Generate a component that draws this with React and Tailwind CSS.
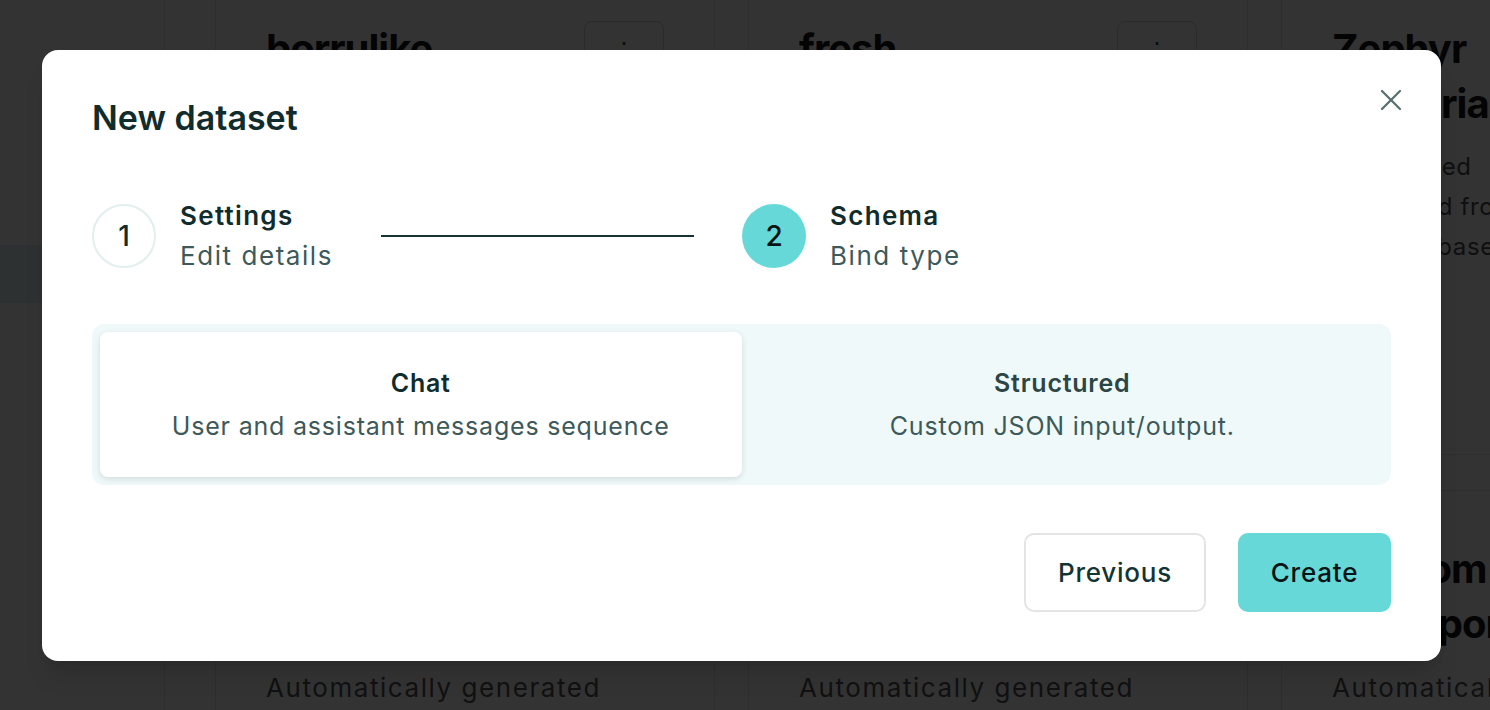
import { X } from 'lucide-react';

const font = { fontFamily: 'Inter, "Noto Sans", sans-serif' };

function BgCard({ title, lines = [], button, footer, tall }) {
  return (
    <div className={tall ? 'h-[485px] border border-gray-200 rounded-xl px-[50px] pt-[50px] relative' : 'border border-gray-200 rounded-xl px-[50px] pt-[50px] pb-8 relative'}>
      {button && (
        <div className="absolute right-[50px] top-[50px] w-[80px] h-[60px] border border-gray-300 rounded-lg flex items-center justify-center text-2xl text-gray-700">⋮</div>
      )}
      <div className="text-[40px] leading-[55px] font-bold text-[#151515] tracking-tight">{title}</div>
      {lines.length > 0 && (
        <div className="mt-4 text-[24px] leading-[40px] text-[#4a4a4a] tracking-wide">
          {lines.map((l, i) => (
            <div key={i}>{l}</div>
          ))}
        </div>
      )}
      {footer && <div className="mt-[19px] text-[26px] leading-[36px] text-[#555555] tracking-[0.06em]">{footer}</div>}
    </div>
  );
}

function Step({ n, title, sub, active }) {
  return (
    <div className="flex items-center gap-6">
      <div
        className={
          active
            ? 'w-16 h-16 rounded-full bg-[#66d8d8] flex items-center justify-center text-[28px] font-medium text-[#0a1414]'
            : 'w-16 h-16 rounded-full border-2 border-[#e3eeee] flex items-center justify-center text-[28px] font-medium text-[#102c2c]'
        }
      >
        {n}
      </div>
      <div className="flex flex-col">
        <span className="text-[26px] leading-[40px] font-semibold text-[#102c2c] tracking-[0.05em]">{title}</span>
        <span className="text-[26px] leading-[40px] text-[#3d5959] tracking-[0.06em]">{sub}</span>
      </div>
    </div>
  );
}

export default function App() {
  return (
    <div className="relative w-[1490px] h-[710px] overflow-hidden bg-white" style={font}>
      {/* page behind the dialog */}
      <div className="flex h-full">
        <aside className="w-[165px] shrink-0 border-r border-gray-200 pt-[245px]">
          <div className="h-[58px] bg-[#dff5f5]" />
        </aside>
        <main className="flex-1 pl-[50px] -mt-[30px]">
          <div className="grid grid-cols-[500px_500px_500px] gap-x-[33px] gap-y-[35px]">
            <BgCard tall title="borrulike" button lines={['A base set', 'generated for', 'testing']} />
            <BgCard tall title="fresh" button lines={['Fresh samples', 'collected from', 'production']} />
            <BgCard tall title={<>Zephyr<br />7b-variants</>} lines={['Auto-based', 'generated from', 'prompts based']} />
            <BgCard title={<>Custom<br />export</>} footer="Automatically generated" />
            <BgCard title={<>Random<br />import</>} footer="Automatically generated" />
            <BgCard title={<>Random<br />Transport</>} footer="Automatically generated" />
          </div>
        </main>
      </div>

      {/* overlay */}
      <div className="absolute inset-0 bg-black/80 flex items-center justify-center pr-[7px]">
        <div className="relative w-[1399px] bg-white rounded-2xl px-[50px] pt-[48px] pb-[49px] shadow-xl">
          <button className="absolute top-[32px] right-[32px] text-[#587070]">
            <X size={36} strokeWidth={1.5} />
          </button>
          <h2 className="text-[34px] leading-[40px] font-semibold text-[#102c2c]">New dataset</h2>

          <div className="mt-[58px] flex items-center">
            <Step n="1" title="Settings" sub="Edit details" />
            <div className="w-[313px] h-[2px] bg-[#163232] mx-[48px]" />
            <Step n="2" title="Schema" sub="Bind type" active />
          </div>

          <div className="mt-[48px] bg-[#eff9f9] rounded-xl p-2 grid grid-cols-2 h-[161px]">
            <div className="bg-white rounded-lg shadow-[0_2px_6px_rgba(0,0,0,0.12)] flex flex-col items-center justify-center gap-[11px]">
              <span className="text-[25px] leading-[32px] font-semibold text-[#102c2c] tracking-[0.03em]">Chat</span>
              <span className="text-[25px] leading-[32px] text-[#3d5959] tracking-[0.8px]">User and assistant messages sequence</span>
            </div>
            <div className="flex flex-col items-center justify-center gap-[11px]">
              <span className="text-[25px] leading-[32px] font-semibold text-[#2c4545] tracking-[0.03em]">Structured</span>
              <span className="text-[25px] leading-[32px] text-[#3d5959] tracking-[0.8px]">Custom JSON input/output.</span>
            </div>
          </div>

          <div className="mt-[48px] flex justify-end gap-8">
            <button className="w-[182px] h-[79px] rounded-[10px] border-2 border-[#e4e4e4] text-[26px] font-medium text-[#143434] tracking-[0.03em]">
              Previous
            </button>
            <button className="w-[153px] h-[79px] rounded-[10px] bg-[#66d8d8] text-[26px] font-medium text-[#0a1414] tracking-[0.03em]">
              Create
            </button>
          </div>
        </div>
      </div>
    </div>
  );
}
